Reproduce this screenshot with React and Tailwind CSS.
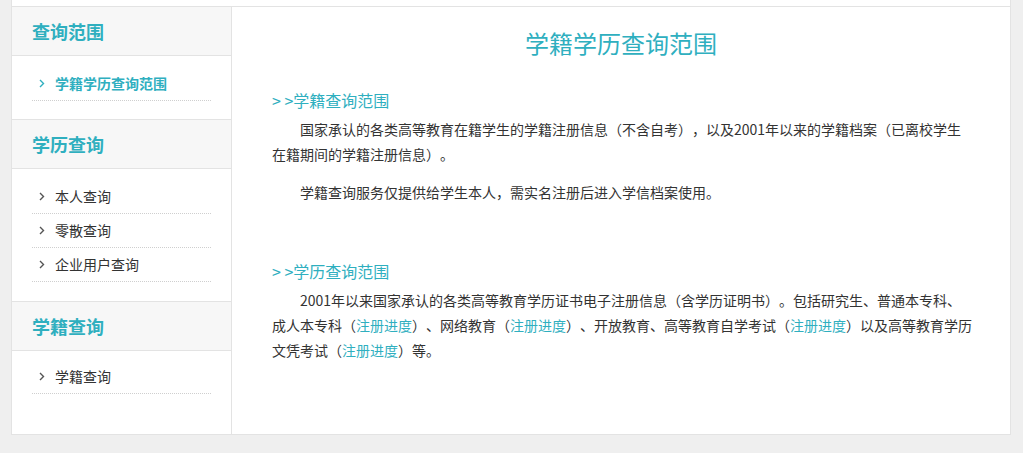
import React from "react";

const teal = "text-[#2fafbf]";

const menu = [
  { title: "查询范围", items: [{ label: "学籍学历查询范围", active: true }], pt: "pt-[11px]", pb: "pb-[18px]" },
  {
    title: "学历查询",
    items: [{ label: "本人查询" }, { label: "零散查询" }, { label: "企业用户查询" }],
    pt: "pt-[11px]",
    pb: "pb-[19px]",
  },
  { title: "学籍查询", items: [{ label: "学籍查询" }], pt: "pt-[9px]", pb: "pb-[40px]", last: true },
];

function Chevron({ active }) {
  return (
    <svg width="6" height="9" viewBox="0 0 6 9" className="mr-[10px] ml-[7px]">
      <path
        d="M1 1 L4.5 4.5 L1 8"
        fill="none"
        stroke={active ? "#2fafbf" : "#555"}
        strokeWidth="1.4"
      />
    </svg>
  );
}

function Link({ children }) {
  return <span className={teal}>{children}</span>;
}

export default function App() {
  return (
    <div
      className="min-h-[453px] bg-[#efefef] pl-[11px] [text-spacing-trim:space-all]"
      style={{ fontFamily: '"Noto Sans CJK SC", "Noto Sans", sans-serif' }}
    >
      <div className="w-[1000px] bg-white border-x border-b border-[#e3e3e3]">
        <div className="h-[7px] border-b border-[#e3e3e3]"></div>
        <div className="flex">
          {/* sidebar */}
          <aside className="w-[220px] shrink-0 border-r border-[#e3e3e3]">
            {menu.map((sec) => (
              <div
                key={sec.title}
                className={sec.last ? "" : "border-b border-[#e3e3e3]"}
              >
                <div className="h-[49px] bg-[#f7f7f7] border-b border-[#e3e3e3] px-[20px] flex items-center">
                  <h2 className={`text-[18px] font-bold ${teal}`}>{sec.title}</h2>
                </div>
                <ul className={`mx-[20px] ${sec.pt} ${sec.pb}`}>
                  {sec.items.map((it) => (
                    <li
                      key={it.label}
                      className="h-[34px] flex items-center border-b border-dotted border-[#cfcfcf]"
                    >
                      <Chevron active={it.active} />
                      <span
                        className={`text-[14px] ${
                          it.active ? `${teal} font-bold` : "text-[#333]"
                        }`}
                      >
                        {it.label}
                      </span>
                    </li>
                  ))}
                </ul>
              </div>
            ))}
          </aside>

          {/* content */}
          <main className="flex-1 pl-[40px] pr-[24px] text-[14px] text-[#333]">
            <h1 className={`text-center text-[24px] leading-[36px] pt-[18px] pr-[16px] ${teal}`}>
              学籍学历查询范围
            </h1>

            <section className="mt-[27px]">
              <h3 className={`text-[16px] leading-[24px] ${teal}`}>&gt; &gt;学籍查询范围</h3>
              <p className="mt-[5px] leading-[25px] indent-[2em]">
                国家承认的各类高等教育在籍学生的学籍注册信息（不含自考），以及2001年以来的学籍档案（已离校学生
                <br />
                在籍期间的学籍注册信息）。
              </p>
              <p className="mt-[13px] leading-[25px] indent-[2em]">
                学籍查询服务仅提供给学生本人，需实名注册后进入学信档案使用。
              </p>
            </section>

            <section className="mt-[54px]">
              <h3 className={`text-[16px] leading-[24px] ${teal}`}>&gt; &gt;学历查询范围</h3>
              <p className="mt-[5px] leading-[25px] indent-[2em]">
                2001年以来国家承认的各类高等教育学历证书电子注册信息（含学历证明书）。包括研究生、普通本专科、
                <br />
                成人本专科（<Link>注册进度</Link>）、网络教育（<Link>注册进度</Link>）、开放教育、高等教育自学考试（
                <Link>注册进度</Link>）以及高等教育学历
                <br />
                文凭考试（<Link>注册进度</Link>）等。
              </p>
            </section>
          </main>
        </div>
      </div>
    </div>
  );
}
